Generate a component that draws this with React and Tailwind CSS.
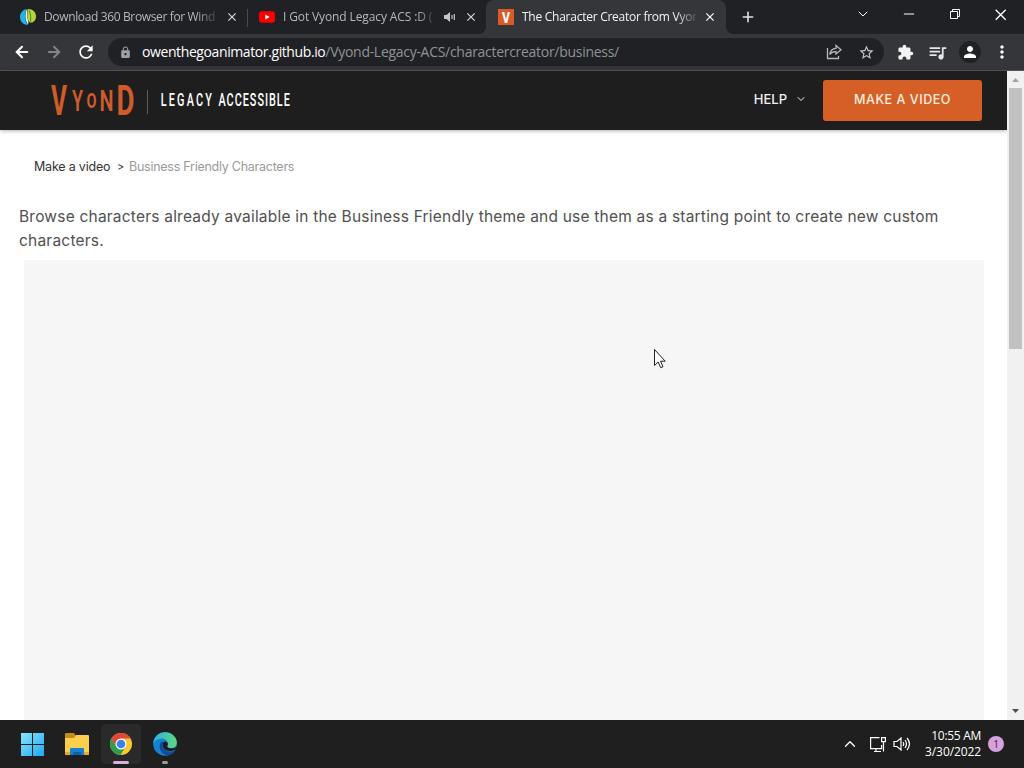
import { ArrowLeft, ArrowRight, ChevronDown, ChevronUp, Plus, Minus } from 'lucide-react';
import {
  MdClose,
  MdRefresh,
  MdLock,
  MdStarBorder,
  MdExtension,
  MdQueueMusic,
  MdPerson,
  MdMoreVert,
} from 'react-icons/md';

const tabs = [
  {
    title: 'Download 360 Browser for Wind',
    icon: <LeafIcon />,
    box: 'w-[248px] pl-5',
    text: 'w-[173px] tracking-[-0.36px] text-[#b4b7bb]',
    close: 'ml-2',
  },
  {
    title: 'I Got Vyond Legacy ACS :D (',
    icon: <YoutubeIcon />,
    box: 'w-[238px] pl-[11px]',
    text: 'w-[152px] tracking-[-0.12px] text-[#b4b7bb]',
    close: 'ml-2',
    audio: true,
  },
  {
    title: 'The Character Creator from Vyon',
    icon: <VIcon />,
    box: 'w-[240px] pl-3 bg-[#35363a] rounded-t-lg',
    text: 'w-[174px] tracking-[-0.26px] text-[#f1f3f4]',
    close: 'ml-[7px] text-white',
    active: true,
  },
];

function LeafIcon() {
  return (
    <svg width="16" height="16" viewBox="0 0 16 16">
      <path d="M6.500 0C2.500 1 0 4 0 8c0 4.500 3 7.500 8 8C4.500 12 4.500 5 6.500 0z" fill="#20b4e6" />
      <path d="M6.500.800C5 6 5 11 8 15.500l.500-2.200C7 9 6.800 4 7.500.500z" fill="#eafaff" />
      <path d="M8 0c5 0 8 3.500 8 7.500S13 14 10 13.500C7.500 12 6.500 6 8 0z" fill="#b5d33a" />
      <path d="M9 1.500c1.500 3 2 7 1.500 11" stroke="#4f9c2d" strokeWidth="1.200" fill="none" />
    </svg>
  );
}

function YoutubeIcon() {
  return (
    <svg width="16" height="16" viewBox="0 0 16 16">
      <rect y="2.300" width="16" height="11.500" rx="3" fill="#f00" />
      <path d="M6.300 5.500v5l4.400-2.500z" fill="#fff" />
    </svg>
  );
}

function VIcon() {
  return (
    <svg width="16" height="16" viewBox="0 0 16 16">
      <rect width="16" height="16" fill="#d85b26" />
      <text x="4" y="13.500" fontSize="15.500" fontWeight="800" fontFamily="Roboto" fill="#fff" textLength="8" lengthAdjust="spacingAndGlyphs">V</text>
    </svg>
  );
}

function SoundIcon() {
  return (
    <svg className="ml-[9px] flex-shrink-0" width="12" height="12" viewBox="0 0 12 12" fill="#c4c7ca">
      <path d="M0 4h2.500L6 1v10L2.500 8H0z" />
      <path d="M8 4v4M10.300 3v6" stroke="#c4c7ca" strokeWidth="1.200" />
    </svg>
  );
}

function Tab({ tab }) {
  return (
    <div className={`relative flex h-[34px] flex-shrink-0 items-center ${tab.box}`}>
      <span className="flex-shrink-0">{tab.icon}</span>
      <span
        className={`ml-2 flex-shrink-0 whitespace-nowrap text-[12px] leading-4 [mask-image:linear-gradient(to_right,#000_88%,transparent_102%)] ${tab.text}`}
      >
        {tab.title}
      </span>
      {tab.audio && <SoundIcon />}
      <MdClose className={`flex-shrink-0 text-[#d5d7da] ${tab.close}`} size={14} />
      {tab.active && (
        <>
          <span className="absolute -left-2 bottom-0 h-2 w-2 bg-[radial-gradient(circle_at_0_0,transparent_8px,#35363a_8px)]" />
          <span className="absolute -right-2 bottom-0 h-2 w-2 bg-[radial-gradient(circle_at_100%_0,transparent_8px,#35363a_8px)]" />
        </>
      )}
    </div>
  );
}

function TabStrip() {
  return (
    <div className="flex h-[34px] bg-[#202124]">
      <Tab tab={tabs[0]} />
      <div className="-ml-px mt-[9px] h-[18px] w-px bg-[#4a4c50]" />
      <Tab tab={tabs[1]} />
      <Tab tab={tabs[2]} />
      <Plus className="ml-[14px] mt-[9px] flex-shrink-0 text-[#e1e3e5]" size={16} strokeWidth={2.4} />
      <div className="ml-auto flex items-start text-white">
        <ChevronDown className="mr-[30px] mt-[6px]" size={16} strokeWidth={1.5} />
        <Minus className="mr-[33px] mt-[6px]" size={16} strokeWidth={1.700} />
        <svg className="mr-[33px] mt-[9px]" width="12" height="12" viewBox="0 0 12 12" fill="none" stroke="#fff">
          <path d="M.5 2.500h7v7h-7zM2.500 2.500v-2h7v7h-2" />
        </svg>
        <svg className="mr-[17px] mt-[9px]" width="12" height="12" viewBox="0 0 12 12" stroke="#fff" strokeWidth="1.300">
          <path d="M.7.700l10 10M10.700.7l-10 10" />
        </svg>
      </div>
    </div>
  );
}

function Toolbar() {
  return (
    <div className="flex h-[37px] items-center border-b border-[#55565a] bg-[#35363a] text-white">
      <ArrowLeft className="ml-[13px]" size={18} strokeWidth={2.8} />
      <ArrowRight className="ml-[14px] text-[#838589]" size={18} strokeWidth={2.500} />
      <MdRefresh className="ml-[13px]" size={20} />
      <div className="ml-3 flex h-7 w-[776px] items-center rounded-full bg-[#202124] pl-[11px]">
        <MdLock className="text-[#9aa0a6]" size={13} />
        <span className="ml-[10px] whitespace-nowrap text-[14px] leading-5 text-[#8f9398]">
          <span className="tracking-[-0.4px] text-white">owenthegoanimator.github.io</span>
          <span className="tracking-[-0.29px]">/Vyond-Legacy-ACS/charactercreator/business/</span>
        </span>
        <svg className="ml-auto" width="16" height="16" viewBox="0 0 16 16" fill="none" stroke="#b4b7bb" strokeWidth="1.300">
          <path d="M1.500 4v10.500h11V12" />
          <path d="M10 1.500l5 4.200-5 4.200V7.700C7 7.500 5.200 8.500 3.800 10.500 4.300 7 6.500 4.500 10 4.300z" />
        </svg>
        <MdStarBorder className="ml-4 mr-[9px] text-[#c4c7ca]" size={17} />
      </div>
      <MdExtension className="ml-[13px] text-[#f1f3f4]" size={17} />
      <MdQueueMusic className="ml-[13px] text-[#e4e6e8]" size={21} />
      <div className="ml-[11px] flex h-[22px] w-[22px] items-center justify-center rounded-full bg-[#202124]">
        <MdPerson size={18} />
      </div>
      <MdMoreVert className="ml-[11px]" size={20} />
    </div>
  );
}

function VyondLogo() {
  return (
    <svg className="overflow-visible" width="244" height="40" viewBox="50 80 244 40" fontFamily="Roboto" fill="#cf5c2a">
      <g fontWeight="700">
        <text x="51" y="115" fontSize="42" textLength="16" lengthAdjust="spacingAndGlyphs">V</text>
        <text x="72" y="111" fontSize="30" fontWeight="600" textLength="11" lengthAdjust="spacingAndGlyphs">Y</text>
        <text x="86.500" y="108" fontSize="21" textLength="10" lengthAdjust="spacingAndGlyphs">O</text>
        <text x="99.500" y="111" fontSize="30" fontWeight="600" textLength="14" lengthAdjust="spacingAndGlyphs">N</text>
        <text x="116.500" y="115" fontSize="42" textLength="18" lengthAdjust="spacingAndGlyphs">D</text>
      </g>
      <path d="M147.500 90v24" stroke="#5b5b5b" />
      <g fontSize="17.500" fontWeight="500" fill="#fff">
        <text transform="translate(160.800 106.300) scale(.62 1)" letterSpacing="3.500">LEGACY</text>
        <text transform="translate(218.500 106.300) scale(.62 1)" letterSpacing="1.600">ACCESSIBLE</text>
      </g>
    </svg>
  );
}

function Page() {
  return (
    <div className="flex min-h-0 flex-1 bg-white">
      <main className="flex w-[1007px] flex-col font-[Inter,sans-serif]">
        <header className="flex h-[59px] flex-shrink-0 items-start bg-[#1e1e1e] pl-[50px] pt-[9px] shadow-[0_1px_4px_rgba(0,0,0,0.3)]">
          <VyondLogo />
          <div className="ml-auto flex h-[41px] items-center text-[#f2f2f2]">
            <span className="-mt-0.5 text-[13px] font-medium">HELP</span>
            <ChevronDown className="-mt-[3px] ml-2" size={12} strokeWidth={2} />
            <button className="ml-4 mr-[25px] h-[41px] w-[159px] rounded-[3px] bg-[#d65f27] text-[12.500px] font-medium tracking-[0.55px] text-[#fff1df]">
              MAKE A VIDEO
            </button>
          </div>
        </header>
        <nav className="mt-[27px] flex h-5 items-center pl-[34px] text-[12.500px] tracking-[-0.2px] text-[#333]">
          <span className="w-[76px] whitespace-nowrap">Make a video</span>
          <span className="ml-[7px] w-[7px] text-[11px]">&gt;</span>
          <span className="ml-[5px] tracking-[-0.26px] text-[#999]">Business Friendly Characters</span>
        </nav>
        <p className="mt-7 h-12 flex-shrink-0 whitespace-nowrap pl-[19px] text-[15.500px] leading-6 tracking-[0.21px] text-[#505050]">
          Browse characters already available in the Business Friendly theme and use them as a starting point to create new custom
          <br />
          characters.
        </p>
        <div className="ml-6 mt-[7px] w-[960px] flex-1 bg-[#f6f6f6]" />
      </main>
      <div className="flex w-[17px] flex-col items-center bg-[#f1f1f1]">
        <svg width="17" height="17" viewBox="0 0 17 17">
          <path d="M5 11h7l-3.500-4z" fill="#a3a3a3" />
        </svg>
        <div className="h-[261px] w-[13px] bg-[#c1c1c1]" />
        <svg className="mt-auto" width="17" height="17" viewBox="0 0 17 17">
          <path d="M5 6h7l-3.500 4z" fill="#505050" />
        </svg>
      </div>
    </div>
  );
}

function WindowsIcon() {
  return (
    <svg width="24" height="24" viewBox="0 0 24 24">
      <linearGradient id="win" x1="0" y1="0" x2="1" y2="1">
        <stop stopColor="#8be3fa" />
        <stop offset="1" stopColor="#1caaf0" />
      </linearGradient>
      <path d="M1 1h11v11H1zM13 1h11v11H13zM1 13h11v11H1zM13 13h11v11H13z" fill="url(#win)" />
    </svg>
  );
}

function FolderIcon() {
  return (
    <svg width="26" height="24" viewBox="0 0 26 24">
      <path d="M1 2q0-1 1-1h8l2 3v2H1z" fill="#c88b13" />
      <path d="M1 6h9l2-3h12q1 0 1 1v18q0 1-1 1H2q-1 0-1-1z" fill="#fbcf4b" />
      <path d="M1 20h24v2q0 1-1 1H2q-1 0-1-1z" fill="#e9ab26" />
      <path d="M6 23v-6q0-1 1-1h12q1 0 1 1v6z" fill="#1681d2" />
      <path d="M9 23v-3h8v3z" fill="#0b62ac" />
    </svg>
  );
}

function ChromeIcon() {
  return (
    <svg width="24" height="24" viewBox="0 0 24 24">
      <circle cx="12" cy="12" r="11" fill="#fbc92f" />
      <path d="M2.400 6.600A11 11 0 0 1 21.600 6.600H12L7.500 15z" fill="#df4939" />
      <path d="M2.400 6.600A11 11 0 0 0 11.500 23L16.500 15H7.500z" fill="#2a9d4e" />
      <circle cx="12" cy="12" r="5.500" fill="#fff" />
      <circle cx="12" cy="12" r="4.300" fill="#3f7fe8" />
    </svg>
  );
}

function EdgeIcon() {
  return (
    <svg width="24" height="24" viewBox="0 0 24 24">
      <linearGradient id="edgeTop">
        <stop stopColor="#2bb3e8" />
        <stop offset="1" stopColor="#62d67a" />
      </linearGradient>
      <circle cx="12" cy="12" r="11.800" fill="#1583d0" />
      <path d="M.2 12C.5 5 5.500.2 12 .2c7 0 11.800 5 11.800 10 0 4-3 6-6.300 6-3 0-4.500-1.200-3-3C16 9 12 5.700 8 6.500 4 7 1 9 .2 12z" fill="url(#edgeTop)" />
      <path d="M8.500 9.500c-4 4.500-1 13 6 14 3.500-.5 6.500-2.500 8-5.500-5 3.500-13 1-13-4.500 0-1.500.5-2.500 1.500-3.500z" fill="#0d4d9c" />
      <path d="M11 9.700c-2.800 3-1 8.500 5 9.300 2.500.3 5-.5 6.500-1.500.5.300.4.700 0 1.500l1.500-1V15l-3 1c-4.500 1-7.500-.5-6.500-2.500 1.300-1.800-.5-4.500-3.500-3.800z" fill="#1e1e1e" />
    </svg>
  );
}

function Taskbar() {
  return (
    <div className="flex h-12 items-center bg-[#1f1f1f] pl-5 text-white">
      <WindowsIcon />
      <div className="ml-5">
        <FolderIcon />
      </div>
      <div className="relative ml-[11px] flex h-10 w-10 items-center justify-center rounded bg-[#2a2a2a]">
        <ChromeIcon />
        <span className="absolute bottom-0 left-3 h-[3px] w-4 rounded-full bg-[#dcaee0]" />
      </div>
      <div className="relative ml-3">
        <EdgeIcon />
        <span className="absolute -bottom-2 left-[9px] h-[3px] w-1.5 rounded-full bg-[#9a9a9a]" />
      </div>
      <ChevronUp className="ml-auto mr-[10px]" size={18} strokeWidth={1.700} />
      <svg width="18" height="17" viewBox="0 0 18 17" fill="none" stroke="#fff" strokeWidth="1.200">
        <path d="M10.500 1.600H1.600v11h11V9M5 15.500h7M7 13v2.500" />
        <path d="M12.600 1.600h3.800v4h-3.800zM14.500 6v9.500" />
      </svg>
      <svg className="ml-1.5" width="18" height="16" viewBox="0 0 18 16" fill="none" stroke="#fff" strokeWidth="1.200">
        <path d="M1 5.500h3L8 2v12L4 10.500H1zM10 6q1.500 2 0 4M12 4q3 4 0 8M14 2q5 6 0 12" />
      </svg>
      <div className="ml-[10px] w-[60px] text-right text-[12px] leading-4">
        <div className="whitespace-nowrap tracking-[-0.3px]">10:55 AM</div>
        <div className="whitespace-nowrap tracking-[-0.1px]">3/30/2022</div>
      </div>
      <div className="ml-[7px] mr-5 flex h-4 w-4 items-center justify-center rounded-full bg-[#d9a0df] text-[10px] text-[#33203a]">1</div>
    </div>
  );
}

export default function App() {
  return (
    <div className="relative flex h-[768px] w-[1024px] flex-col overflow-hidden font-['Open_Sans',sans-serif]">
      <TabStrip />
      <Toolbar />
      <Page />
      <Taskbar />
      {/* Mouse pointer */}
      <svg className="absolute left-[653px] top-[348px]" width="13" height="21" viewBox="0 0 13 21">
        <path d="M1.500 1.500v16l3.700-3.500 2.500 5.700 2.300-1-2.500-5.500h4.700z" fill="#fff" stroke="#222" />
      </svg>
    </div>
  );
}
